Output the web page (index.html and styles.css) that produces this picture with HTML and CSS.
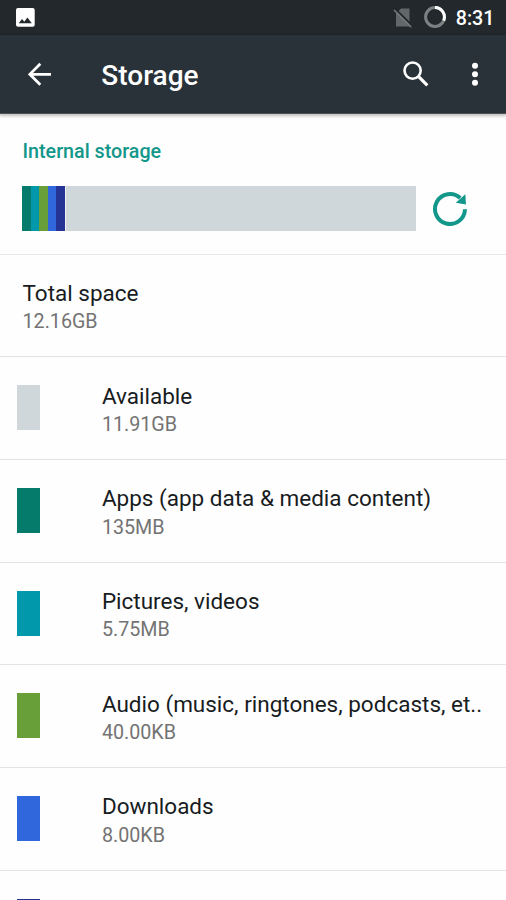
FILE: index.html
```html
<!DOCTYPE html>
<html lang="en">
<head>
<meta charset="utf-8">
<title>Storage</title>
<link rel="stylesheet" href="styles.css">
</head>
<body>
<div class="screen">
  <div class="status">
    <svg class="status-photo" viewBox="0 0 19 19"><rect width="18.7" height="18.7" rx="2" fill="#fff"/><path d="M2.8 15.2 6 11l2.3 2.700 3.100-4.200 4.400 5.700z" fill="#22282b"/></svg>
    <svg class="status-sim" viewBox="0 0 20 20"><path d="M8 .5h8.500V18.500H3V5.500z" fill="#636769"/><path d="M2.200.9 19.500 18" stroke="#22282b" stroke-width="2"/><path d="M1 2 18.300 19.200" stroke="#777b7d" stroke-width="1.500"/></svg>
    <svg class="status-ring" viewBox="0 0 22 22"><circle cx="11" cy="11" r="9.4" fill="none" stroke="#7c8183" stroke-width="3"/><path d="M11 1.600a9.400 9.400 0 0 1 8.700 13" fill="none" stroke="#fff" stroke-width="3"/></svg>
    <span class="clock">8:31</span>
  </div>
  <header class="toolbar">
    <svg class="back" viewBox="0 0 24 24"><path d="M12.300 1.800 1.800 12.300l10.500 10.500M2.400 12.300H23" fill="none" stroke="#fff" stroke-width="2.700"/></svg>
    <h1 class="heading">Storage</h1>
    <svg class="search" viewBox="0 0 26 26"><circle cx="9.600" cy="9.600" r="8.100" fill="none" stroke="#fff" stroke-width="2.600"/><path d="m15.400 15.400 8.900 9" stroke="#fff" stroke-width="3.200"/></svg>
    <svg class="more" viewBox="0 0 6 24"><g fill="#fff"><circle cx="3" cy="3.700" r="3"/><circle cx="3" cy="12.200" r="3"/><circle cx="3" cy="20.700" r="3"/></g></svg>
  </header>
  <main>
    <section class="overview">
      <h2 class="category">Internal storage</h2>
      <div class="usage">
        <div class="bar"><i class="apps"></i><i class="pictures"></i><i class="audio"></i><i class="downloads"></i><i class="cached"></i></div>
        <svg class="refresh" viewBox="0 0 36 36"><path d="M28.200 7A15 15 0 1 0 33 18.300" fill="none" stroke="#12978a" stroke-width="4"/><path d="M33.300 3.300 34 13.600 23.800 11.800z" fill="#12978a"/></svg>
      </div>
    </section>
    <div class="row total"><div class="text"><div class="title">Total space</div><div class="size">12.16GB</div></div></div>
    <div class="row"><i class="swatch free"></i><div class="text"><div class="title">Available</div><div class="size">11.91GB</div></div></div>
    <div class="row"><i class="swatch apps"></i><div class="text"><div class="title">Apps (app data &amp; media content)</div><div class="size">135MB</div></div></div>
    <div class="row"><i class="swatch pictures"></i><div class="text"><div class="title">Pictures, videos</div><div class="size">5.75MB</div></div></div>
    <div class="row"><i class="swatch audio"></i><div class="text"><div class="title">Audio (music, ringtones, podcasts, et..</div><div class="size">40.00KB</div></div></div>
    <div class="row"><i class="swatch downloads"></i><div class="text"><div class="title">Downloads</div><div class="size">8.00KB</div></div></div>
    <div class="row"><i class="swatch cached"></i></div>
  </main>
</div>
</body>
</html>
```
FILE: styles.css
```css
* { box-sizing: border-box; }
body { margin: 0; font-family: Roboto, sans-serif; background: #fefefe; }
svg { display: block; flex: none; }
h1, h2 { margin: 0; font-weight: 500; }
.screen { height: 900px; overflow: hidden; }

.status { height: 35px; background: #22282b; display: flex; align-items: center; padding: 0 11.5px 0 16px; }
.status-photo { width: 19px; height: 19px; }
.status-sim { width: 20px; height: 20px; margin-left: auto; }
.status-ring { width: 22px; height: 22px; margin: 0 10px 2px 11px; }
.clock { font-size: 19.7px; font-weight: 500; color: #fff; line-height: 35px; padding-top: 2px; }

.toolbar { height: 79px; background: #283238; display: flex; align-items: center; padding: 0 28px; border-bottom: 1px solid #4d5254; box-shadow: 0 1px 3px 1px rgba(0,0,0,.25); position: relative; }
.back { width: 24px; height: 24px; }
.heading { font-size: 28px; line-height: 34px; color: #fff; margin-left: 49.3px; padding-top: 4px; }
.search { width: 26px; height: 26px; margin-left: auto; }
.more { width: 6px; height: 24px; margin-left: 43px; }

.overview { height: 140.5px; padding: 26px 22px 0; border-bottom: 1px solid #e9e9e9; }
.category { font-size: 19.7px; line-height: 24px; color: #12978a; margin-left: .5px; }
.usage { display: flex; align-items: center; margin-top: 22.4px; }
.bar { width: 394px; height: 45px; background: #cfd7da; display: flex; }
.bar i { width: 8.5px; }
.bar i:last-child { width: 9.5px; border-right: 1px solid #eef0f4; }
.refresh { width: 36px; height: 36px; margin-left: 16px; }

.row { height: 102.7px; display: flex; align-items: flex-start; padding: 25.4px 18px 0 17.4px; border-bottom: 1px solid #e3e3e3; }
.total { padding-left: 22.5px; }
.total .text { margin-left: 0; }
.swatch { width: 23px; height: 45px; margin-top: 2.8px; flex: none; }
.text { margin-left: 62px; white-space: nowrap; }
.swatch + .text { margin-left: 61.5px; }
.title { font-size: 22.5px; line-height: 26px; color: #181c1e; }
.size { font-size: 19.7px; line-height: 24px; color: #737373; margin-top: 4.5px; }

.free { background: #cfd7da; }
.apps { background: #057b6c; }
.pictures { background: #0098aa; }
.audio { background: #689f38; }
.downloads { background: #3067dc; }
.cached { background: #253494; }
```
